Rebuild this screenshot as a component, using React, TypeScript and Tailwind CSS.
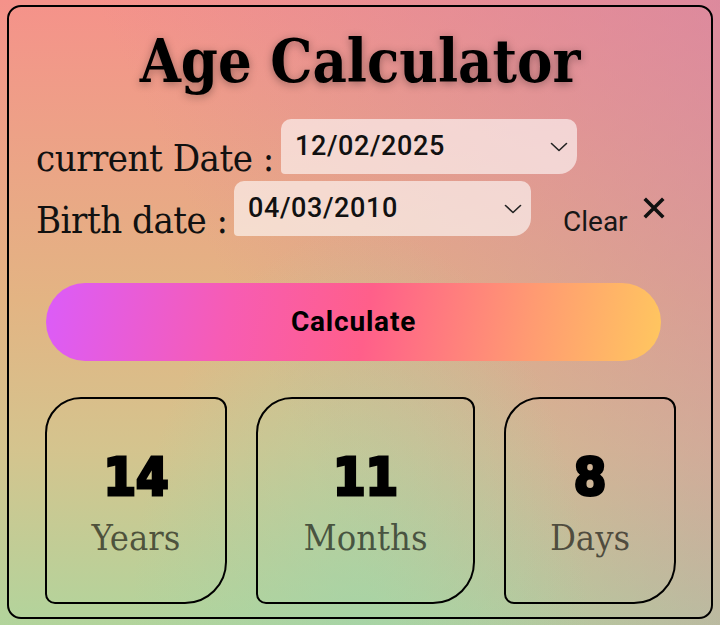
import { useState } from "react";

type DateFieldProps = {
  value: string;
  width: string;
};

function DateField({ value, width }: DateFieldProps) {
  return (
    <div
      className={`${width} h-[55px] flex items-center justify-between pl-[14px] pr-[9px] bg-white/60 rounded-[10px_10px_18px_4px]`}
    >
      <span className="font-['Roboto',sans-serif] font-medium text-[27px] tracking-[0.6px] text-[#111] leading-none -mt-[1px]">
        {value}
      </span>
      <svg width="18" height="10" viewBox="0 0 18 10" fill="none">
        <polyline points="1.5,1.5 9,8.5 16.5,1.5" stroke="#222" strokeWidth="1.6" strokeLinecap="round" strokeLinejoin="round" />
      </svg>
    </div>
  );
}

function ResultBox({ value, label, width }: { value: number; label: string; width: string }) {
  return (
    <div
      className={`${width} h-[207px] border-2 border-black rounded-[36px_12px_42px_10px] flex flex-col items-center justify-center pt-[5px]`}
    >
      <div className="font-['DejaVu_Sans_Condensed','DejaVu_Sans',sans-serif] [font-stretch:condensed] font-bold text-[52px] leading-none text-black [-webkit-text-stroke:3px_black]">
        {value}
      </div>
      <div className="mt-[17px] font-['DejaVu_Serif_Condensed','DejaVu_Serif',serif] [font-stretch:condensed] text-[36px] leading-none text-black/60">
        {label}
      </div>
    </div>
  );
}

export default function App() {
  const [current] = useState("12/02/2025");
  const [birth] = useState("04/03/2010");

  return (
    <div className="w-[720px] h-[625px] pt-[5px] pl-[7px] bg-[radial-gradient(ellipse_at_50%_100%,rgba(160,212,172,0.6),transparent_45%),linear-gradient(65deg,transparent_38%,rgba(205,132,170,0.6)_100%),linear-gradient(180deg,#f5928a_0%,#e3b483_48%,#d4c48e_72%,#b2d49c_100%)]">
      <div className="w-[706px] h-[614px] border-2 border-black rounded-[14px] flex flex-col">
        {/* Header */}
        <h1 className="mt-[25px] text-center font-['DejaVu_Serif_Condensed','DejaVu_Serif',serif] [font-stretch:condensed] font-bold text-[59px] leading-none text-black [text-shadow:0_2px_8px_rgba(0,0,0,0.35)]">
          Age Calculator
        </h1>

        {/* Dates */}
        <div className="mt-[28px] pl-[27px] flex flex-col gap-[7px]">
          <div className="flex items-end">
            <span className="w-[245px] whitespace-nowrap font-['DejaVu_Serif_Condensed','DejaVu_Serif',serif] [font-stretch:condensed] text-[38px] tracking-[-0.5px] leading-none text-[#111] -mb-[3px]">
              current Date :
            </span>
            <DateField value={current} width="w-[296px]" />
          </div>
          <div className="flex items-end">
            <span className="w-[198px] whitespace-nowrap font-['DejaVu_Serif_Condensed','DejaVu_Serif',serif] [font-stretch:condensed] text-[38px] tracking-[-0.5px] leading-none text-[#111] -mb-[3px]">
              Birth date :
            </span>
            <DateField value={birth} width="w-[297px]" />
            <div className="ml-[32px] flex items-start">
              <span className="mt-[25px] font-['Roboto',sans-serif] text-[28px] leading-none text-[#161616]">
                Clear
              </span>
              <svg className="ml-[15px] mt-[14px]" width="22" height="22" viewBox="0 0 22 22">
                <path d="M3 3 L19 19 M19 3 L3 19" stroke="#111" strokeWidth="3.6" strokeLinecap="square" />
              </svg>
            </div>
          </div>
        </div>

        {/* Button */}
        <button className="mt-[47px] ml-[37px] w-[615px] h-[78px] rounded-full bg-[linear-gradient(100deg,#db5cf9_0%,#f75cb3_30%,#ff5f8a_52%,#ff9a72_78%,#ffc75f_100%)] font-['Roboto',sans-serif] font-bold text-[28px] tracking-[0.8px] text-black">
          Calculate
        </button>

        {/* Results */}
        <div className="mt-[36px] ml-[36px] flex gap-[29px]">
          <ResultBox value={14} label="Years" width="w-[182px]" />
          <ResultBox value={11} label="Months" width="w-[219px]" />
          <ResultBox value={8} label="Days" width="w-[172px]" />
        </div>
      </div>
    </div>
  );
}
